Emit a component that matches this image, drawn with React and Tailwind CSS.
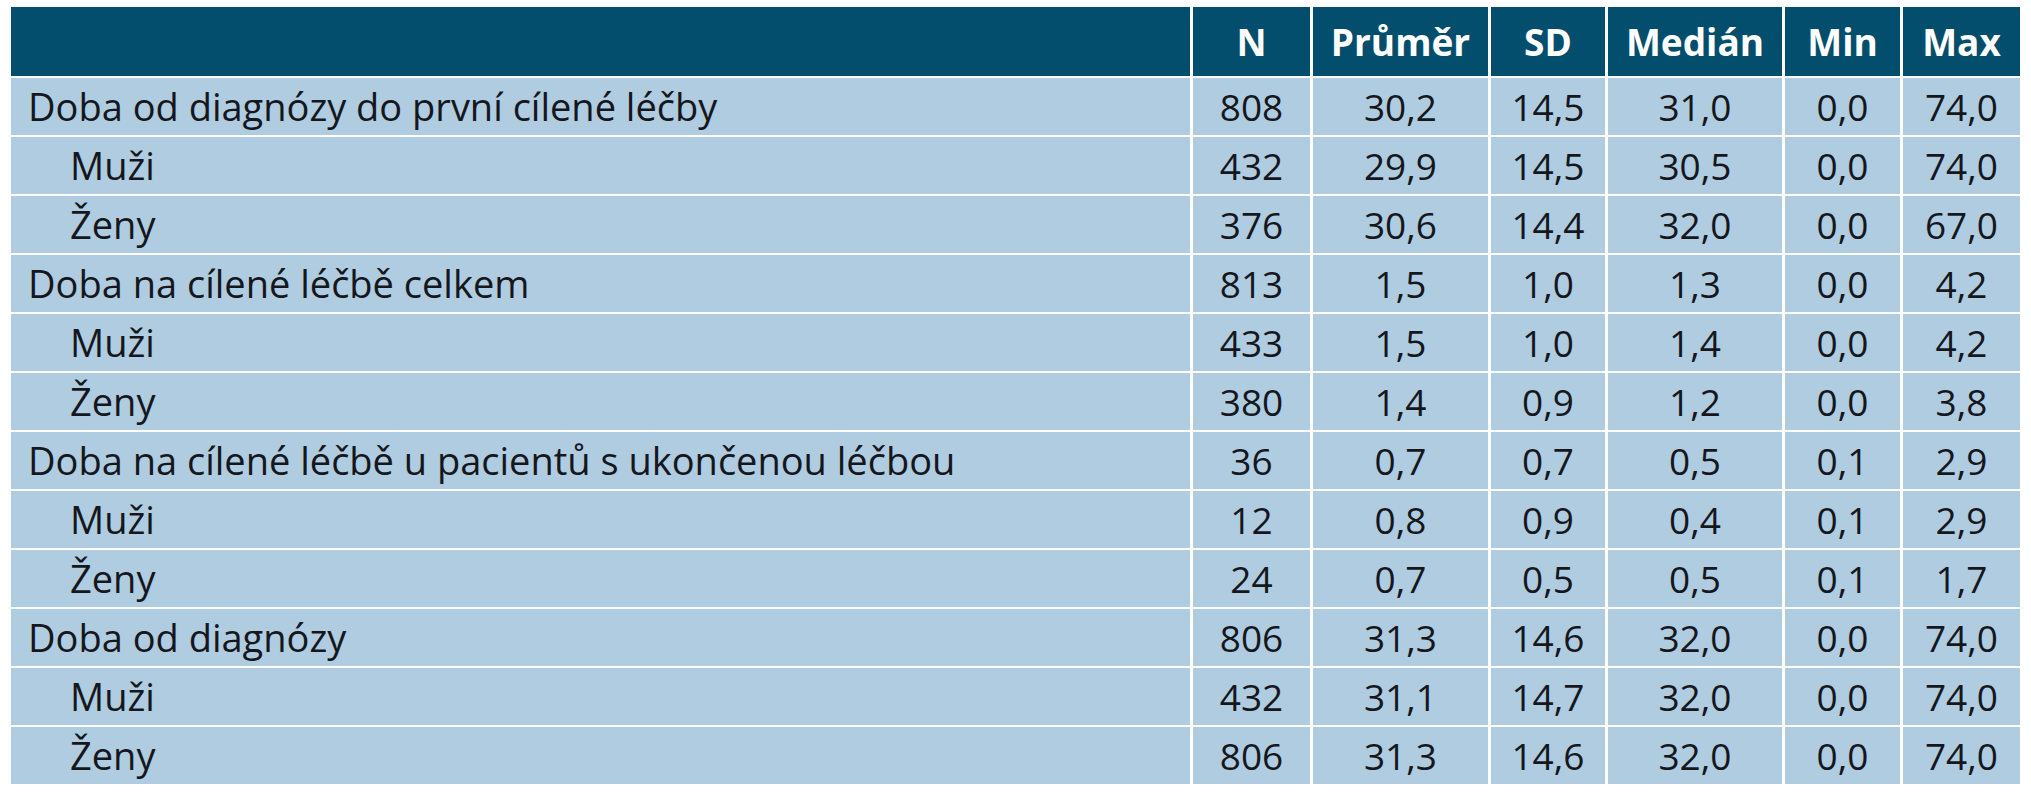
const headers = ["N", "Průměr", "SD", "Medián", "Min", "Max"];

const rows = [
  { label: "Doba od diagnózy do první cílené léčby", values: ["808", "30,2", "14,5", "31,0", "0,0", "74,0"] },
  { label: "Muži", sub: true, values: ["432", "29,9", "14,5", "30,5", "0,0", "74,0"] },
  { label: "Ženy", sub: true, values: ["376", "30,6", "14,4", "32,0", "0,0", "67,0"] },
  { label: "Doba na cílené léčbě celkem", values: ["813", "1,5", "1,0", "1,3", "0,0", "4,2"] },
  { label: "Muži", sub: true, values: ["433", "1,5", "1,0", "1,4", "0,0", "4,2"] },
  { label: "Ženy", sub: true, values: ["380", "1,4", "0,9", "1,2", "0,0", "3,8"] },
  { label: "Doba na cílené léčbě u pacientů s ukončenou léčbou", values: ["36", "0,7", "0,7", "0,5", "0,1", "2,9"] },
  { label: "Muži", sub: true, values: ["12", "0,8", "0,9", "0,4", "0,1", "2,9"] },
  { label: "Ženy", sub: true, values: ["24", "0,7", "0,5", "0,5", "0,1", "1,7"] },
  { label: "Doba od diagnózy", values: ["806", "31,3", "14,6", "32,0", "0,0", "74,0"] },
  { label: "Muži", sub: true, values: ["432", "31,1", "14,7", "32,0", "0,0", "74,0"] },
  { label: "Ženy", sub: true, values: ["806", "31,3", "14,6", "32,0", "0,0", "74,0"] },
];

export default function App() {
  return (
    <div className="min-h-screen bg-white pt-[7px] pl-[11px] font-['Open_Sans',sans-serif]">
      <div className="grid w-[2009px] grid-cols-[1179px_117px_175px_114px_174px_115px_117px] gap-x-[3px] gap-y-[2px]">
        {/* header */}
        <div className="h-[69px] bg-[#034e6c]" />
        {headers.map((h) => (
          <div
            key={h}
            className="flex h-[69px] items-center justify-center bg-[#034e6c] text-[37px] font-bold text-white"
          >
            {h}
          </div>
        ))}

        {/* body */}
        {rows.map((row, i) => (
          <div key={i} className="contents">
            <div
              className={`flex h-[57px] items-center bg-[#afcce0] text-[38px] text-[#15171d] ${
                row.sub ? "pl-[59px]" : "pl-[17px]"
              }`}
            >
              {row.label}
            </div>
            {row.values.map((v, j) => (
              <div
                key={j}
                className="flex h-[57px] items-center justify-center bg-[#afcce0] text-[37px] text-[#15171d]"
              >
                {v}
              </div>
            ))}
          </div>
        ))}
      </div>
    </div>
  );
}
